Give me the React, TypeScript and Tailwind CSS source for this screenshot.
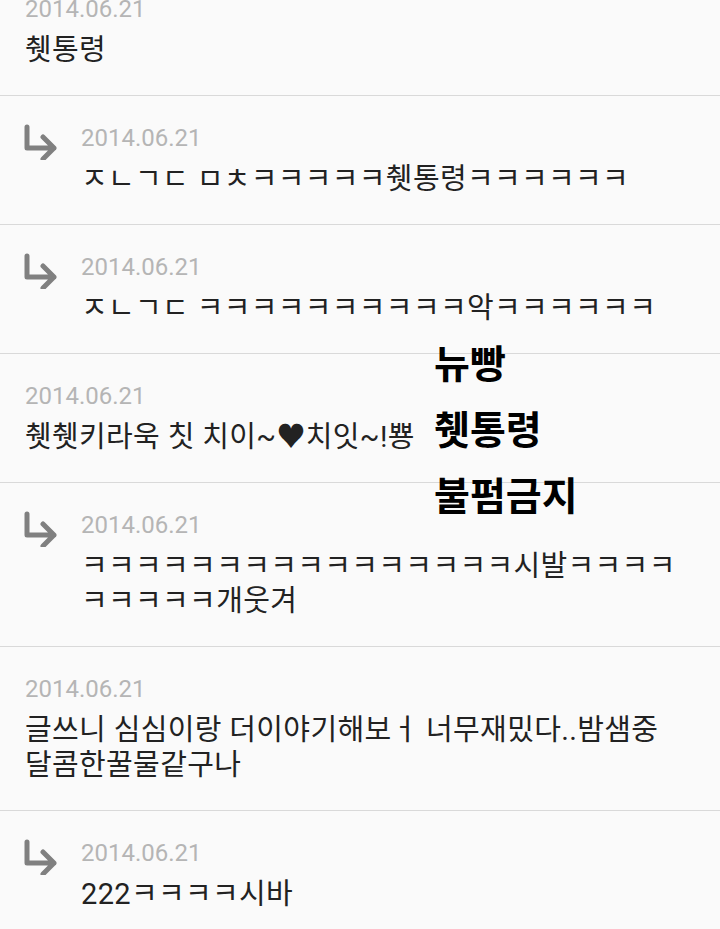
import React from 'react';

type Comment = {
  date: string;
  lines: string[];
  reply?: boolean;
};

const comments: Comment[] = [
  { date: '2014.06.21', lines: ['췟통령'] },
  { date: '2014.06.21', lines: ['ㅈㄴㄱㄷ ㅁㅊㅋㅋㅋㅋㅋ췟통령ㅋㅋㅋㅋㅋㅋ'], reply: true },
  { date: '2014.06.21', lines: ['ㅈㄴㄱㄷ ㅋㅋㅋㅋㅋㅋㅋㅋㅋㅋ악ㅋㅋㅋㅋㅋㅋ'], reply: true },
  { date: '2014.06.21', lines: ['췟췟키라욱 칫 치이~♥치잇~!뿅'] },
  {
    date: '2014.06.21',
    lines: ['ㅋㅋㅋㅋㅋㅋㅋㅋㅋㅋㅋㅋㅋㅋㅋㅋ시발ㅋㅋㅋㅋ', 'ㅋㅋㅋㅋㅋ개웃겨'],
    reply: true,
  },
  {
    date: '2014.06.21',
    lines: ['글쓰니 심심이랑 더이야기해보ㅓ 너무재밌다..밤샘중', '달콤한꿀물같구나'],
  },
  { date: '2014.06.21', lines: ['222ㅋㅋㅋㅋ시바'], reply: true },
];

const ReplyArrow: React.FC = () => (
  <svg width="36" height="36" viewBox="0 0 36 36" fill="none" className="mt-[2px] -ml-[3px]">
    <path
      d="M5 3 V24 H32 M21 13 L32 24 L21 35"
      stroke="#808080"
      strokeWidth="5"
      strokeLinecap="round"
      strokeLinejoin="round"
    />
  </svg>
);

const App: React.FC = () => {
  return (
    <div
      className="relative w-[720px] h-[929px] overflow-hidden bg-[#fafafa]"
      style={{ fontFamily: 'Roboto, "Noto Sans CJK KR", sans-serif' }}
    >
      <div className="-mt-[33px]">
        {comments.map((c, i) => (
          <div key={i} className="border-b border-[#d9d9d9]">
            <div className="flex pl-[25px] pt-[26px] pb-[27px]">
              {c.reply && (
                <div className="w-[56px] shrink-0">
                  <ReplyArrow />
                </div>
              )}
              <div>
                <div className="text-[24px] leading-[32px] text-[#b5b5b5]">{c.date}</div>
                <div className="mt-[8px] text-[29px] leading-[35px] tracking-[0.35px] text-[#222222]">
                  {c.lines.map((line, j) => (
                    <div key={j} className="whitespace-nowrap">
                      {line}
                    </div>
                  ))}
                </div>
              </div>
            </div>
          </div>
        ))}
      </div>

      {/* watermark overlay */}
      <div
        className="absolute left-[434px] top-[328px] text-[39px] leading-[66px] font-bold text-black"
        style={{ fontFamily: '"Noto Sans CJK KR", sans-serif' }}
      >
        <div>뉴빵</div>
        <div>췟통령</div>
        <div>불펌금지</div>
      </div>
    </div>
  );
};

export default App;
